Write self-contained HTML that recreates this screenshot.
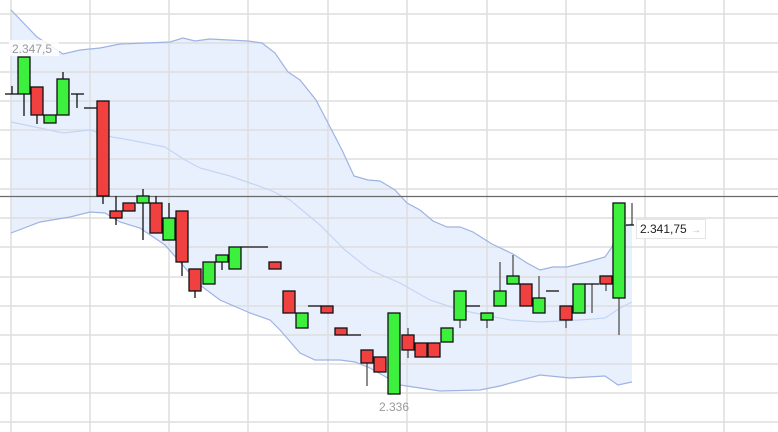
<!DOCTYPE html>
<html><head><meta charset="utf-8"><style>
html,body{margin:0;padding:0;background:#fff;}
svg{display:block;font-family:"Liberation Sans",sans-serif;}
</style></head><body>
<svg width="778" height="432" viewBox="0 0 778 432" xmlns="http://www.w3.org/2000/svg">
<rect width="778" height="432" fill="#fff"/>
<!-- band fill -->
<polygon fill="#e9f0fd" points="11,10 37,37 63,54 80,50 100,48 120,44 170,42 183,38 195,41 210,39 248,41 262,43 275,53 288,72 300,80 316,100 328,123 342,150 354,176 368,180 380,181 395,190 407,203 420,210 433,221 447,227 460,227 473,232 492,244 513,254 527,263 540,270 553,267 567,267 587,262 605,257 612,247 618,230 625,226 632,224 632,382 618,385 605,376 570,378 540,375 500,386 480,390 440,391 400,385 370,368 355,362 340,360 315,360 300,353 280,330 270,320 250,313 220,300 200,285 180,262 165,245 140,228 120,222 105,213 90,212 70,217 40,222 11,233"/>
<!-- grid -->
<g stroke="#dedede" stroke-width="1.5">
<line x1="11" y1="0" x2="11" y2="432"/><line x1="90" y1="0" x2="90" y2="432"/><line x1="169" y1="0" x2="169" y2="432"/><line x1="248" y1="0" x2="248" y2="432"/><line x1="328" y1="0" x2="328" y2="432"/><line x1="407" y1="0" x2="407" y2="432"/><line x1="487" y1="0" x2="487" y2="432"/><line x1="566" y1="0" x2="566" y2="432"/><line x1="645" y1="0" x2="645" y2="432"/><line x1="724" y1="0" x2="724" y2="432"/>
<line x1="0" y1="14" x2="778" y2="14"/><line x1="0" y1="43" x2="778" y2="43"/><line x1="0" y1="72" x2="778" y2="72"/><line x1="0" y1="101" x2="778" y2="101"/><line x1="0" y1="130" x2="778" y2="130"/><line x1="0" y1="159" x2="778" y2="159"/><line x1="0" y1="189" x2="778" y2="189"/><line x1="0" y1="218" x2="778" y2="218"/><line x1="0" y1="247" x2="778" y2="247"/><line x1="0" y1="277" x2="778" y2="277"/><line x1="0" y1="306" x2="778" y2="306"/><line x1="0" y1="335" x2="778" y2="335"/><line x1="0" y1="364" x2="778" y2="364"/><line x1="0" y1="393" x2="778" y2="393"/><line x1="0" y1="422" x2="778" y2="422"/>
</g>
<!-- band lines -->
<polyline fill="none" stroke="#9db3e3" stroke-width="1.2" points="11,10 37,37 63,54 80,50 100,48 120,44 170,42 183,38 195,41 210,39 248,41 262,43 275,53 288,72 300,80 316,100 328,123 342,150 354,176 368,180 380,181 395,190 407,203 420,210 433,221 447,227 460,227 473,232 492,244 513,254 527,263 540,270 553,267 567,267 587,262 605,257 612,247 618,230 625,226 632,224"/>
<polyline fill="none" stroke="#9db3e3" stroke-width="1.2" points="11,233 40,222 70,217 90,212 105,213 120,222 140,228 165,245 180,262 200,285 220,300 250,313 270,320 280,330 300,353 315,360 340,360 355,362 370,368 400,385 440,391 480,390 500,386 540,375 570,378 605,376 618,385 632,382"/>
<polyline fill="none" stroke="#c3d5f5" stroke-width="1.2" points="11,122 40,128 63,133 90,130 112,137 130,140 165,147 185,160 200,168 230,176 250,183 270,190 290,200 320,225 345,250 370,270 400,283 430,300 460,310 485,315 510,320 540,322 580,320 605,318 620,308 632,302"/>
<!-- price line -->
<line x1="0" y1="196.5" x2="778" y2="196.5" stroke="#6a6a6a" stroke-width="1.3"/>
<!-- wicks -->
<g stroke="#111" stroke-width="1.3">
<line x1="5" y1="94" x2="18" y2="94"/><line x1="12" y1="86" x2="12" y2="94"/>
<line x1="24" y1="94" x2="24" y2="116"/>
<line x1="37" y1="115" x2="37" y2="124"/>
<line x1="63" y1="72" x2="63" y2="79"/>
<line x1="71" y1="94" x2="84" y2="94"/><line x1="77" y1="94" x2="77" y2="108"/>
<line x1="84" y1="108" x2="97" y2="108"/>
<line x1="103" y1="196" x2="103" y2="204"/>
<line x1="116" y1="196" x2="116" y2="225"/>
<line x1="143" y1="189" x2="143" y2="240"/>
<line x1="156" y1="196" x2="156" y2="203"/>
<line x1="169" y1="203" x2="169" y2="218"/>
<line x1="182" y1="262" x2="182" y2="276"/>
<line x1="195" y1="291" x2="195" y2="298"/>
<line x1="222" y1="262" x2="222" y2="270"/>
<line x1="241" y1="247" x2="268" y2="247"/>
<line x1="308" y1="306" x2="321" y2="306"/>
<line x1="347" y1="335" x2="361" y2="335"/>
</g>
<g stroke="#666" stroke-width="1.5">
<line x1="367" y1="363" x2="367" y2="386"/>
<line x1="408" y1="328" x2="408" y2="358"/>
<line x1="460" y1="320" x2="460" y2="328"/>
<line x1="487" y1="320" x2="487" y2="328"/>
<line x1="500" y1="262" x2="500" y2="291"/>
<line x1="513" y1="255" x2="513" y2="276"/>
<line x1="539" y1="276" x2="539" y2="298"/>
<line x1="566" y1="320" x2="566" y2="328"/>
<line x1="592" y1="284" x2="592" y2="313"/>
<line x1="606" y1="284" x2="606" y2="291"/>
<line x1="619" y1="298" x2="619" y2="335"/>
<line x1="632" y1="203" x2="632" y2="225"/>
</g>
<g stroke="#111" stroke-width="1.3">
<line x1="466" y1="306" x2="480" y2="306"/>
<line x1="546" y1="291" x2="559" y2="291"/>
<line x1="585" y1="284" x2="599" y2="284"/>
<line x1="626" y1="225" x2="634" y2="225"/>
</g>
<!-- bodies -->
<g stroke="#111" stroke-width="1.3">
<rect x="18" y="57" width="12" height="37" fill="#3ef03e"/>
<rect x="31" y="87" width="12" height="28" fill="#f04040"/>
<rect x="44" y="115" width="12" height="8" fill="#3ef03e"/>
<rect x="57" y="79" width="12" height="36" fill="#3ef03e"/>
<rect x="97" y="101" width="12" height="95" fill="#f04040"/>
<rect x="110" y="211" width="12" height="7" fill="#f04040"/>
<rect x="123" y="203" width="12" height="8" fill="#f04040"/>
<rect x="137" y="196" width="12" height="7" fill="#3ef03e"/>
<rect x="150" y="203" width="12" height="30" fill="#f04040"/>
<rect x="163" y="218" width="12" height="22" fill="#3ef03e"/>
<rect x="176" y="211" width="12" height="51" fill="#f04040"/>
<rect x="189" y="269" width="12" height="22" fill="#f04040"/>
<rect x="203" y="262" width="12" height="22" fill="#3ef03e"/>
<rect x="216" y="255" width="12" height="7" fill="#3ef03e"/>
<rect x="229" y="247" width="12" height="22" fill="#3ef03e"/>
<rect x="269" y="262" width="12" height="7" fill="#f04040"/>
<rect x="283" y="291" width="12" height="22" fill="#f04040"/>
<rect x="296" y="313" width="12" height="15" fill="#3ef03e"/>
<rect x="321" y="306" width="12" height="7" fill="#f04040"/>
<rect x="335" y="328" width="12" height="7" fill="#f04040"/>
<rect x="361" y="350" width="12" height="13" fill="#f04040"/>
<rect x="374" y="357" width="12" height="15" fill="#f04040"/>
<rect x="388" y="313" width="12" height="81" fill="#3ef03e"/>
<rect x="402" y="335" width="12" height="15" fill="#f04040"/>
<rect x="415" y="343" width="12" height="14" fill="#f04040"/>
<rect x="428" y="343" width="12" height="14" fill="#f04040"/>
<rect x="441" y="328" width="12" height="14" fill="#3ef03e"/>
<rect x="454" y="291" width="12" height="29" fill="#3ef03e"/>
<rect x="481" y="313" width="12" height="7" fill="#3ef03e"/>
<rect x="494" y="291" width="12" height="15" fill="#3ef03e"/>
<rect x="507" y="276" width="12" height="8" fill="#3ef03e"/>
<rect x="520" y="284" width="12" height="22" fill="#f04040"/>
<rect x="533" y="298" width="12" height="15" fill="#3ef03e"/>
<rect x="560" y="306" width="12" height="14" fill="#f04040"/>
<rect x="573" y="284" width="12" height="29" fill="#3ef03e"/>
<rect x="600" y="276" width="12" height="8" fill="#f04040"/>
<rect x="613" y="203" width="12" height="95" fill="#3ef03e"/>
</g>
<!-- labels -->
<rect x="9" y="40" width="50" height="16" fill="#fff" opacity="0.8"/>
<text x="12" y="53" font-size="12" fill="#999">2.347,5</text>
<text x="394" y="411" font-size="12" fill="#999" text-anchor="middle">2.336</text>
<rect x="636.5" y="219.5" width="69" height="19" fill="#fff" stroke="#e4e4e4"/>
<text x="640" y="233" font-size="12" fill="#222">2.341,75</text>
<text x="691" y="233" font-size="10" fill="#bbb">→</text>
</svg>
</body></html>
